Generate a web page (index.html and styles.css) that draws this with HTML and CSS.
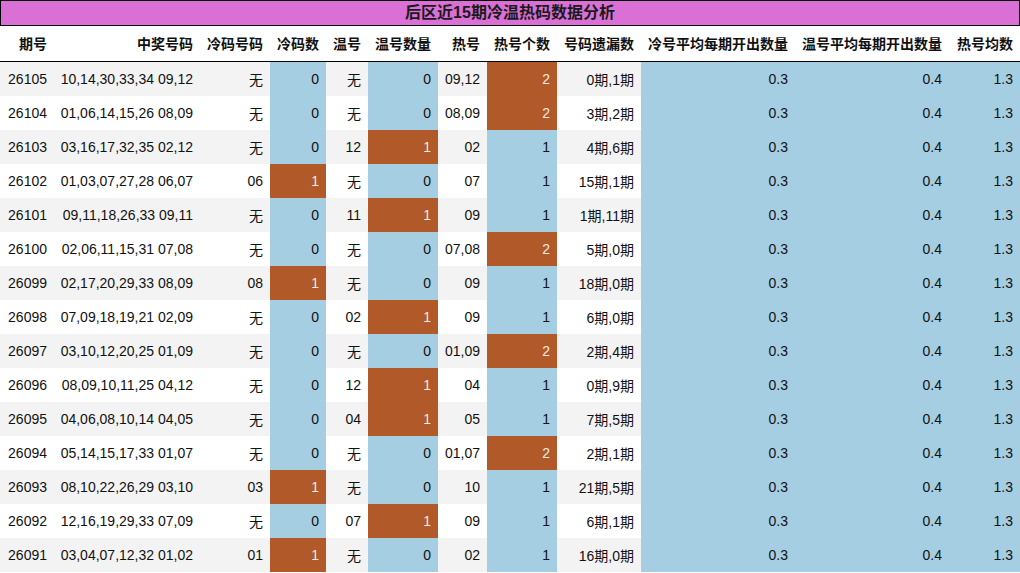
FILE: index.html
```html
<!DOCTYPE html>
<html lang="zh">
<head>
<meta charset="utf-8">
<title>后区近15期冷温热码数据分析</title>
<link rel="stylesheet" href="styles.css">
</head>
<body>
<div class="title">后区近15期冷温热码数据分析</div>
<table class="grid">
<colgroup>
<col style="width:54px"><col style="width:146px"><col style="width:70px"><col style="width:56px"><col style="width:42px"><col style="width:70px"><col style="width:49px"><col style="width:70px"><col style="width:84px"><col style="width:154px"><col style="width:154px"><col style="width:71px">
</colgroup>
<thead>
<tr><th>期号</th><th>中奖号码</th><th>冷码号码</th><th>冷码数</th><th>温号</th><th>温号数量</th><th>热号</th><th>热号个数</th><th>号码遗漏数</th><th>冷号平均每期开出数量</th><th>温号平均每期开出数量</th><th>热号均数</th></tr>
</thead>
<tbody>
<tr><td>26105</td><td>10,14,30,33,34 09,12</td><td>无</td><td class="b">0</td><td>无</td><td class="b">0</td><td>09,12</td><td class="r">2</td><td>0期,1期</td><td class="b">0.3</td><td class="b">0.4</td><td class="b">1.3</td></tr>
<tr><td>26104</td><td>01,06,14,15,26 08,09</td><td>无</td><td class="b">0</td><td>无</td><td class="b">0</td><td>08,09</td><td class="r">2</td><td>3期,2期</td><td class="b">0.3</td><td class="b">0.4</td><td class="b">1.3</td></tr>
<tr><td>26103</td><td>03,16,17,32,35 02,12</td><td>无</td><td class="b">0</td><td>12</td><td class="r">1</td><td>02</td><td class="b">1</td><td>4期,6期</td><td class="b">0.3</td><td class="b">0.4</td><td class="b">1.3</td></tr>
<tr><td>26102</td><td>01,03,07,27,28 06,07</td><td>06</td><td class="r">1</td><td>无</td><td class="b">0</td><td>07</td><td class="b">1</td><td>15期,1期</td><td class="b">0.3</td><td class="b">0.4</td><td class="b">1.3</td></tr>
<tr><td>26101</td><td>09,11,18,26,33 09,11</td><td>无</td><td class="b">0</td><td>11</td><td class="r">1</td><td>09</td><td class="b">1</td><td>1期,11期</td><td class="b">0.3</td><td class="b">0.4</td><td class="b">1.3</td></tr>
<tr><td>26100</td><td>02,06,11,15,31 07,08</td><td>无</td><td class="b">0</td><td>无</td><td class="b">0</td><td>07,08</td><td class="r">2</td><td>5期,0期</td><td class="b">0.3</td><td class="b">0.4</td><td class="b">1.3</td></tr>
<tr><td>26099</td><td>02,17,20,29,33 08,09</td><td>08</td><td class="r">1</td><td>无</td><td class="b">0</td><td>09</td><td class="b">1</td><td>18期,0期</td><td class="b">0.3</td><td class="b">0.4</td><td class="b">1.3</td></tr>
<tr><td>26098</td><td>07,09,18,19,21 02,09</td><td>无</td><td class="b">0</td><td>02</td><td class="r">1</td><td>09</td><td class="b">1</td><td>6期,0期</td><td class="b">0.3</td><td class="b">0.4</td><td class="b">1.3</td></tr>
<tr><td>26097</td><td>03,10,12,20,25 01,09</td><td>无</td><td class="b">0</td><td>无</td><td class="b">0</td><td>01,09</td><td class="r">2</td><td>2期,4期</td><td class="b">0.3</td><td class="b">0.4</td><td class="b">1.3</td></tr>
<tr><td>26096</td><td>08,09,10,11,25 04,12</td><td>无</td><td class="b">0</td><td>12</td><td class="r">1</td><td>04</td><td class="b">1</td><td>0期,9期</td><td class="b">0.3</td><td class="b">0.4</td><td class="b">1.3</td></tr>
<tr><td>26095</td><td>04,06,08,10,14 04,05</td><td>无</td><td class="b">0</td><td>04</td><td class="r">1</td><td>05</td><td class="b">1</td><td>7期,5期</td><td class="b">0.3</td><td class="b">0.4</td><td class="b">1.3</td></tr>
<tr><td>26094</td><td>05,14,15,17,33 01,07</td><td>无</td><td class="b">0</td><td>无</td><td class="b">0</td><td>01,07</td><td class="r">2</td><td>2期,1期</td><td class="b">0.3</td><td class="b">0.4</td><td class="b">1.3</td></tr>
<tr><td>26093</td><td>08,10,22,26,29 03,10</td><td>03</td><td class="r">1</td><td>无</td><td class="b">0</td><td>10</td><td class="b">1</td><td>21期,5期</td><td class="b">0.3</td><td class="b">0.4</td><td class="b">1.3</td></tr>
<tr><td>26092</td><td>12,16,19,29,33 07,09</td><td>无</td><td class="b">0</td><td>07</td><td class="r">1</td><td>09</td><td class="b">1</td><td>6期,1期</td><td class="b">0.3</td><td class="b">0.4</td><td class="b">1.3</td></tr>
<tr><td>26091</td><td>03,04,07,12,32 01,02</td><td>01</td><td class="r">1</td><td>无</td><td class="b">0</td><td>02</td><td class="b">1</td><td>16期,0期</td><td class="b">0.3</td><td class="b">0.4</td><td class="b">1.3</td></tr>
</tbody>
</table>
</body>
</html>
```
FILE: styles.css
```css
html, body {
  margin: 0;
  padding: 0;
  background: #ffffff;
}
body {
  width: 1020px;
  font-family: "Liberation Sans", "Noto Sans CJK SC", sans-serif;
  color: #111111;
}
.title {
  box-sizing: border-box;
  height: 26px;
  border: 1px solid #000000;
  background: #da70d6;
  text-align: center;
  font-weight: bold;
  font-size: 16px;
  line-height: 24px;
  color: #1a1a1a;
}
.grid {
  width: 1020px;
  table-layout: fixed;
  border-collapse: collapse;
  border-spacing: 0;
  font-size: 14px;
}
.grid th {
  height: 34px;
  padding: 0 7px 0 0;
  text-align: right;
  font-weight: bold;
  font-size: 14px;
  white-space: nowrap;
  border-bottom: 1px solid #000000;
  vertical-align: middle;
  background: #ffffff;
}
.grid thead tr {
  height: 35px;
}
.grid td {
  height: 34px;
  padding: 0 7px 0 0;
  text-align: right;
  white-space: nowrap;
  vertical-align: middle;
}
.grid tbody tr {
  height: 34px;
}
.grid tbody tr:nth-child(odd) {
  background: #f3f3f3;
}
.grid tbody tr:nth-child(even) {
  background: #ffffff;
}
.grid td.b {
  background: #a6cee3;
}
.grid td.r {
  background: #b15928;
  color: #f6ece4;
}
```
